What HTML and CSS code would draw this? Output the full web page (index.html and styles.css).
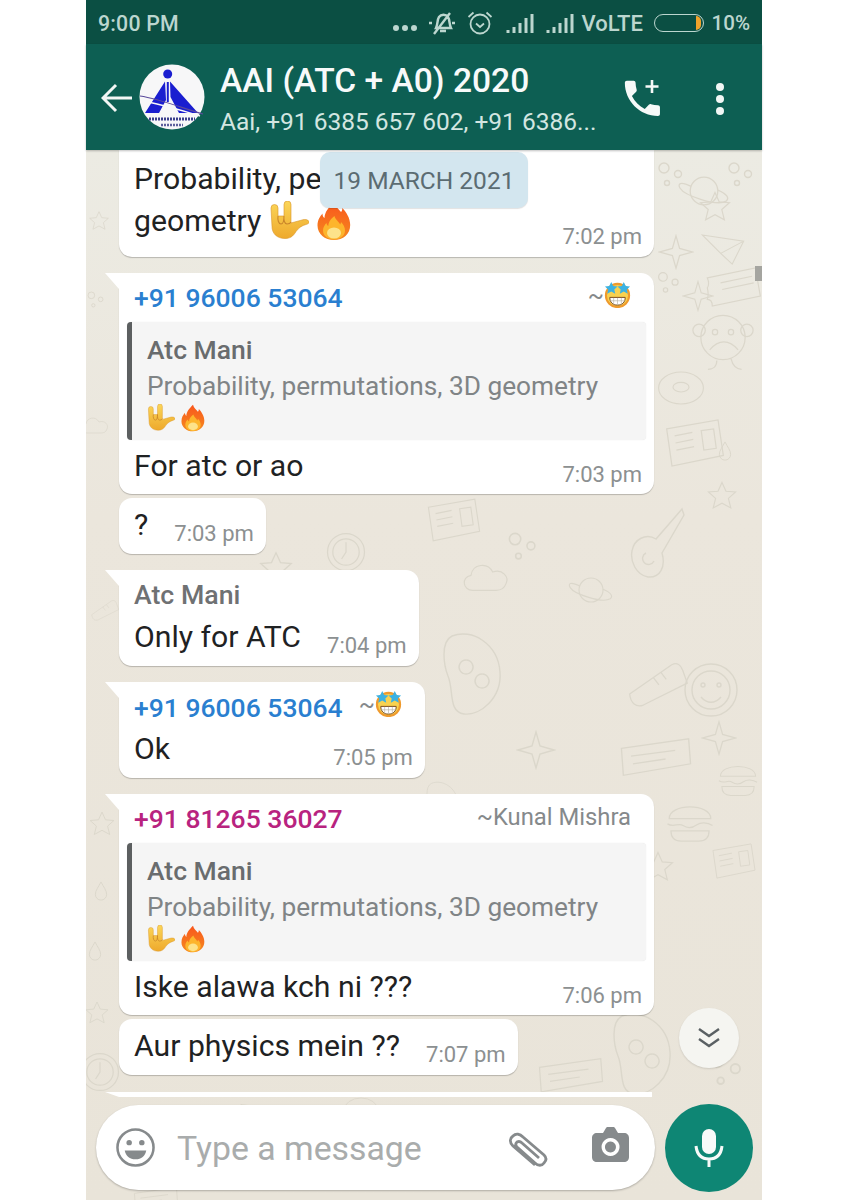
FILE: index.html
```html
<!DOCTYPE html>
<html lang="en">
<head>
<meta charset="utf-8">
<title>AAI (ATC + A0) 2020</title>
<link rel="stylesheet" href="styles.css">
</head>
<body>
<svg class="defs" width="0" height="0" aria-hidden="true">
  <defs>
    <linearGradient id="gold" x1="0" y1="0" x2="0" y2="1"><stop offset="0" stop-color="#fbd659"/><stop offset="1" stop-color="#eea92c"/></linearGradient>
    <linearGradient id="flame" x1="0" y1="0" x2="0" y2="1"><stop offset="0" stop-color="#f9561c"/><stop offset="1" stop-color="#f58a1f"/></linearGradient>
    <symbol id="hand" viewBox="0 0 40 40">
      <path d="M2 7a3.500 3.500 0 0 1 7 0v8h6V3.500a3.500 3.500 0 0 1 7 0V22l11-3c3-1 6-.5 7 1.500.5 1.500-1 2.500-3 3-4 1-7 3-10 7-3 5-6 7-11 7-8 0-13-5-13-12z" fill="url(#gold)" stroke="#d9952a" stroke-width=".6"/>
      <path d="M9 15c-.5 4 .5 8 3 8s3-4 3-8M15 15c-.5 4 .5 8 3 8 2 0 3.500-1 4-2" fill="none" stroke="#c9852a" stroke-width="1.100"/>
    </symbol>
    <symbol id="fire" viewBox="0 0 36 40">
      <path d="M18 1c1 5 5 7 7 10 1-1 1.500-2.500 1.200-4 4 4 8 10 8 17 0 9-7 15-16.200 15S1.500 33 1.500 24.500C1.500 19 4 15.500 6.500 12.500c0 2 .6 3.500 2 4.500C8.500 11 13 6 18 1z" fill="url(#flame)"/>
      <path d="M18.500 15c.6 3.500 4 5 5.700 8.500.5-.7.800-1.500.8-2.500 2.500 2.500 4 5.500 4 8.500 0 5.500-5 9-11 9S7 35 7 29.500c0-3 1.500-5.500 3.500-7.500.2 1.300.7 2.200 1.800 3 .2-4.500 3-7.500 6.200-10z" fill="#fdb52c"/>
      <ellipse cx="18" cy="32" rx="7" ry="5.500" fill="#fde38a"/>
    </symbol>
    <symbol id="star" viewBox="0 0 28 28">
      <circle cx="14" cy="15" r="12" fill="#f8d24f" stroke="#ef9a2d" stroke-width="2.200"/>
      <path d="M6 17h16c0 5-3 8-8 8s-8-3-8-8z" fill="#fff" stroke="#7a4a1c" stroke-width="1"/>
      <path d="M6.500 20.500h15M10 17.500v7M14 17.500v7.500M18 17.500v7" stroke="#b9b3a6" stroke-width=".7"/>
      <path d="M7.500 1l2 4.200 4.500.5-3.300 3.100.9 4.500-4.100-2.300-4.100 2.300.9-4.500L1 5.700l4.500-.5zM20.500 1l2 4.200 4.500.5-3.300 3.100.9 4.500-4.100-2.300-4.100 2.300.9-4.500L14 5.700l4.500-.5z" fill="#3cb2e2"/>
    </symbol>
    <symbol id="planet" viewBox="0 0 60 50"><circle cx="30" cy="25" r="15"/><path d="M16 20C4 14 1 17 4 22c5 8 40 20 50 14 4-3 1-8-9-12"/></symbol>
    <symbol id="spark" viewBox="0 0 40 40"><path d="M20 2l4 14 14 4-14 4-4 14-4-14-14-4 14-4z"/></symbol>
    <symbol id="five" viewBox="0 0 40 40"><path d="M20 3l5 11 12 1-9 8 3 12-11-6-11 6 3-12-9-8 12-1z"/></symbol>
    <symbol id="plane" viewBox="0 0 60 50"><path d="M3 8l54 8-15 30-15-14zM27 32l30-16"/></symbol>
    <symbol id="ticket" viewBox="0 0 70 50"><path d="M4 14L62 2l6 34-58 12c0-6-2-8-6-8 2-6 1-10 0-14 2-2 2-8 0-12zM20 20l38-8M22 28l38-8"/></symbol>
    <symbol id="monkey" viewBox="0 0 70 80"><circle cx="35" cy="36" r="25"/><circle cx="8" cy="28" r="7"/><circle cx="62" cy="28" r="7"/><circle cx="26" cy="30" r="3"/><circle cx="44" cy="30" r="3"/><path d="M20 50c10-12 22-12 32 0M28 62c0 8-6 10-10 10M44 60c2 8 6 12 12 12"/></symbol>
    <symbol id="donut" viewBox="0 0 60 50"><ellipse cx="30" cy="25" rx="28" ry="20"/><ellipse cx="30" cy="24" rx="10" ry="6"/></symbol>
    <symbol id="news" viewBox="0 0 70 60"><path d="M3 14l58-10 6 40-58 12zM12 22l20-4M13 30l20-4M14 38l20-4M42 16l14-2 3 22-14 2z"/></symbol>
    <symbol id="guitar" viewBox="0 0 60 80"><path d="M56 4L30 34c-10-6-22 0-24 12-2 10 4 24 16 26 12 1 18-10 14-24l22-38zM20 48a6 6 0 1 0 8 8"/></symbol>
    <symbol id="burger" viewBox="0 0 60 50"><path d="M6 20C6 2 54 2 54 20zM4 26c8 5 12-2 18 2s12 2 16-1 12-3 18 1M8 34h44c0 10-6 12-12 12H20C14 46 8 44 8 34z"/></symbol>
    <symbol id="clock" viewBox="0 0 50 50"><circle cx="25" cy="25" r="21"/><circle cx="25" cy="25" r="15"/><path d="M25 14v11l-5 8"/></symbol>
    <symbol id="cloud" viewBox="0 0 60 40"><path d="M14 36C2 36 0 20 12 18 14 4 32 2 38 14c12-4 20 6 16 14-2 6-6 8-12 8z"/></symbol>
    <symbol id="drop" viewBox="0 0 20 30"><path d="M10 2c4 8 8 12 8 18a8 8 0 0 1-16 0c0-6 4-10 8-18z"/></symbol>
    <symbol id="face" viewBox="0 0 60 60"><circle cx="30" cy="30" r="26"/><circle cx="30" cy="30" r="19"/><circle cx="22" cy="25" r="2"/><circle cx="38" cy="25" r="2"/><path d="M20 37c6 7 14 7 20 0"/></symbol>
    <symbol id="bean" viewBox="0 0 70 90"><path d="M16 6c20-8 46 8 48 36 2 26-20 44-36 42C12 82 18 60 12 46 8 36 4 12 16 6zM30 30a7 7 0 1 0 .1 0M46 44a7 7 0 1 0 .1 0"/></symbol>
    <symbol id="shoe" viewBox="0 0 70 50"><path d="M4 36L50 4c6-3 10 0 12 6l5 14-48 24c-8 3-14-2-15-12zM30 18l6 8M38 12l6 8"/></symbol>
    <symbol id="film" viewBox="0 0 80 50"><path d="M4 14L74 4l2 26L6 42zM14 22l46-6M16 30l34-5"/></symbol>
    <symbol id="rings" viewBox="0 0 30 30"><circle cx="8" cy="8" r="5"/><circle cx="22" cy="14" r="3.500"/><circle cx="11" cy="23" r="2.500"/></symbol>
  </defs>
</svg>

<main class="phone">
  <header class="app-top">
    <div class="status">
      <span class="status-time">9:00 PM</span>
      <div class="status-right">
        <span class="status-dots"><i></i><i></i><i></i></span>
        <svg class="ic-mute" viewBox="0 0 28 26"><path d="M1 13h3M24 13h3M8 18c2-4 1-8 3-11 2-3 7-3 9 0 2 3 1 7 3 11zM12 21h6M22 3L6 24" fill="none" stroke="#bcd6cf" stroke-width="2.400"/></svg>
        <svg class="ic-alarm" viewBox="0 0 26 26"><circle cx="13" cy="14" r="9.500" fill="none" stroke="#bcd6cf" stroke-width="1.800"/><path d="M9 13.500l4 3.500 4-3.500M1.500 7l5-4.500M24.500 7l-5-4.500" fill="none" stroke="#bcd6cf" stroke-width="1.800"/></svg>
        <svg class="ic-signal" viewBox="0 0 28 20"><path d="M1 16h3v3H1zM7 13h3v6H7zM13 9h3v10h-3zM19 4h3v15h-3zM25 0h3v19h-3z" fill="#bcd6cf"/></svg>
        <svg class="ic-signal sig2" viewBox="0 0 28 20"><path d="M1 16h3v3H1zM7 13h3v6H7zM13 9h3v10h-3zM19 4h3v15h-3zM25 0h3v19h-3z" fill="#bcd6cf"/></svg>
        <span class="status-text volte">VoLTE</span>
        <span class="battery"><i></i></span>
        <span class="status-text pct">10%</span>
      </div>
    </div>
    <div class="toolbar">
      <svg class="ic-back" viewBox="0 0 32 30"><path d="M31 15H3M15 2L2 15l13 13" fill="none" stroke="#f2f7f5" stroke-width="3"/></svg>
      <svg class="logo" viewBox="0 0 66 66">
        <circle cx="33" cy="33" r="32.500" fill="#f7f7f8"/>
        <circle cx="28.700" cy="10" r="4.500" fill="#1a1ed0"/>
        <path d="M26 17.500L6 49h14l7-13zM31 17.500L59 49H40L31.500 33z" fill="#1a1ed0"/>
        <path d="M28.800 18v20" stroke="#1a1ed0" stroke-width="2"/>
        <path d="M1 32c20 3 42 12 63 18" fill="none" stroke="#5b4a9c" stroke-width="1.200"/>
        <path d="M3 37c20 3 38 9 58 15" fill="none" stroke="#f7f7f8" stroke-width="1.400"/>
        <path d="M10 55h46" stroke="#3a3e8c" stroke-width="3" stroke-dasharray="2 1"/>
        <path d="M22 61h22" stroke="#5d5f9c" stroke-width="2.400" stroke-dasharray="2 1"/>
      </svg>
      <div class="title-block">
        <h1 class="title">AAI (ATC + A0) 2020</h1>
        <p class="subtitle">Aai, +91 6385 657 602, +91 6386...</p>
      </div>
      <svg class="ic-call" viewBox="0 0 36 37">
        <path transform="translate(-5 -5) scale(1.950)" d="M6.620 10.790c1.440 2.830 3.760 5.140 6.590 6.590l2.200-2.200c.27-.27.67-.36 1.020-.24 1.120.37 2.330.57 3.570.57.55 0 1 .45 1 1V20c0 .55-.45 1-1 1-9.390 0-17-7.610-17-17 0-.55.45-1 1-1h3.500c.55 0 1 .45 1 1 0 1.250.2 2.450.57 3.570.11.35.03.74-.25 1.020l-2.200 2.200z" fill="#f6f9f8"/>
        <path d="M28 0v13M21.500 6.500h13" stroke="#f6f9f8" stroke-width="2.600"/>
      </svg>
      <span class="kebab"><i></i><i></i><i></i></span>
    </div>
  </header>

  <section class="chat">
    <svg class="doodles" viewBox="0 0 676 1050" aria-hidden="true">
      <use href="#planet" x="590" y="18" width="56" height="46"/>
      <use href="#five" x="612" y="40" width="34" height="34"/>
      <use href="#plane" x="614" y="78" width="46" height="40"/>
      <use href="#spark" x="572" y="84" width="36" height="36"/>
      <use href="#rings" x="570" y="10" width="30" height="30"/>
      <use href="#rings" x="640" y="10" width="30" height="30"/>
      <use href="#rings" x="570" y="120" width="26" height="26"/>
      <use href="#ticket" x="618" y="115" width="58" height="44"/>
      <use href="#monkey" x="606" y="155" width="62" height="72"/>
      <use href="#spark" x="596" y="130" width="32" height="32"/>
      <use href="#donut" x="570" y="218" width="50" height="40"/>
      <use href="#news" x="578" y="265" width="62" height="56"/>
      <use href="#drop" x="632" y="290" width="14" height="22"/>
      <use href="#five" x="620" y="330" width="32" height="32"/>
      <use href="#guitar" x="540" y="355" width="60" height="80"/>
      <use href="#clock" x="238" y="380" width="44" height="44"/>
      <use href="#cloud" x="375" y="410" width="50" height="34"/>
      <use href="#five" x="172" y="400" width="36" height="36"/>
      <use href="#rings" x="420" y="380" width="34" height="34"/>
      <use href="#news" x="340" y="345" width="56" height="50"/>
      <use href="#bean" x="350" y="480" width="70" height="90"/>
      <use href="#shoe" x="540" y="510" width="64" height="48"/>
      <use href="#face" x="595" y="510" width="60" height="60"/>
      <use href="#film" x="530" y="585" width="80" height="48"/>
      <use href="#spark" x="615" y="570" width="36" height="36"/>
      <use href="#burger" x="578" y="650" width="52" height="46"/>
      <use href="#five" x="555" y="700" width="34" height="34"/>
      <use href="#bean" x="320" y="630" width="72" height="50"/>
      <use href="#drop" x="8" y="730" width="14" height="22"/>
      <use href="#drop" x="2" y="790" width="14" height="22"/>
      <use href="#five" x="2" y="660" width="28" height="28"/>
      <use href="#shoe" x="4" y="440" width="30" height="40"/>
      <use href="#five" x="2" y="60" width="22" height="22"/>
      <use href="#cloud" x="-6" y="255" width="30" height="40"/>
      <use href="#rings" x="0" y="130" width="20" height="40"/>
      <use href="#news" x="625" y="690" width="46" height="42"/>
      <use href="#burger" x="630" y="610" width="44" height="40"/>
      <use href="#clock" x="-8" y="900" width="44" height="44"/>
      <use href="#five" x="-2" y="850" width="26" height="26"/>
      <use href="#film" x="450" y="905" width="70" height="44"/>
      <use href="#bean" x="520" y="860" width="70" height="90"/>
      <use href="#rings" x="620" y="900" width="40" height="40"/>
      <use href="#planet" x="480" y="420" width="50" height="40"/>
      <use href="#spark" x="430" y="580" width="40" height="40"/>
      <use href="#clock" x="440" y="680" width="50" height="50"/>
      <use href="#cloud" x="350" y="740" width="60" height="40"/>
      <use href="#plane" x="150" y="950" width="40" height="28"/>
      <use href="#donut" x="250" y="945" width="50" height="30"/>
      <use href="#film" x="40" y="1035" width="60" height="30"/>
    </svg>

    <div class="thread">
      <article class="bubble wide top">
        <div class="body">
          <p class="text">Probability, permutations, 3D geometry <svg class="emoji big hand"><use href="#hand"/></svg> <svg class="emoji big fire"><use href="#fire"/></svg></p>
          <time class="stamp">7:02 pm</time>
        </div>
      </article>

      <article class="bubble wide tail">
        <div class="head quoted">
          <span class="sender blue">+91 96006 53064</span>
          <span class="alias">~<svg class="emoji star"><use href="#star"/></svg></span>
        </div>
        <blockquote class="quote">
          <div class="quote-name">Atc Mani</div>
          <div class="quote-text">Probability, permutations, 3D geometry</div>
          <div class="quote-emoji"><svg class="emoji small hand"><use href="#hand"/></svg><svg class="emoji small fire"><use href="#fire"/></svg></div>
        </blockquote>
        <div class="body after-quote">
          <p class="text">For atc or ao</p>
          <time class="stamp">7:03 pm</time>
        </div>
      </article>

      <article class="bubble follow plain">
        <div class="body">
          <p class="text">?</p>
          <time class="stamp">7:03 pm</time>
        </div>
      </article>

      <article class="bubble tail">
        <div class="head"><span class="sender grey">Atc Mani</span></div>
        <div class="body">
          <p class="text">Only for ATC</p>
          <time class="stamp">7:04 pm</time>
        </div>
      </article>

      <article class="bubble tail">
        <div class="head">
          <span class="sender blue">+91 96006 53064</span>
          <span class="alias">~<svg class="emoji star"><use href="#star"/></svg></span>
        </div>
        <div class="body">
          <p class="text">Ok</p>
          <time class="stamp">7:05 pm</time>
        </div>
      </article>

      <article class="bubble wide tail">
        <div class="head quoted">
          <span class="sender pink">+91 81265 36027</span>
          <span class="alias">~Kunal Mishra</span>
        </div>
        <blockquote class="quote">
          <div class="quote-name">Atc Mani</div>
          <div class="quote-text">Probability, permutations, 3D geometry</div>
          <div class="quote-emoji"><svg class="emoji small hand"><use href="#hand"/></svg><svg class="emoji small fire"><use href="#fire"/></svg></div>
        </blockquote>
        <div class="body after-quote">
          <p class="text">Iske alawa kch ni ???</p>
          <time class="stamp">7:06 pm</time>
        </div>
      </article>

      <article class="bubble follow plain">
        <div class="body">
          <p class="text">Aur physics mein ??</p>
          <time class="stamp">7:07 pm</time>
        </div>
      </article>

      <article class="bubble wide tail next"></article>
    </div>

    <div class="date-pill">19 MARCH 2021</div>
    <span class="scroll-thumb"></span>
    <button class="jump" type="button" aria-label="Scroll to bottom">
      <svg viewBox="0 0 24 22"><path d="M2 2l10 7 10-7M2 12l10 7 10-7" fill="none" stroke="#5a6063" stroke-width="2.400"/></svg>
    </button>

    <footer class="composer">
      <div class="input">
        <svg class="ic-smile" viewBox="0 0 40 40"><circle cx="20" cy="20" r="18.500" fill="none" stroke="#868a8c" stroke-width="2.600"/><circle cx="13.500" cy="15" r="2.800" fill="#868a8c"/><circle cx="26.500" cy="15" r="2.800" fill="#868a8c"/><path d="M9 23h22c-1 6-5 9-11 9s-10-3-11-9z" fill="#868a8c"/></svg>
        <span class="placeholder">Type a message</span>
        <svg class="ic-clip" viewBox="0 0 40 36"><path d="M27 33L5 14C1 10 2 6 5 4c3-3 7-2 10 1l21 18c3 3 2 6 0 8-2 3-6 3-9 0L9 15c-2-2-1-4 0-5 2-1 3-1 5 1l17 15" fill="none" stroke="#868a8c" stroke-width="2.800"/></svg>
        <svg class="ic-camera" viewBox="0 0 37 35"><path fill-rule="evenodd" d="M5 6h6l3-5c.5-.7 1-1 2-1h5c1 0 1.500.3 2 1l3 5h6c3 0 5 2 5 5v19c0 3-2 5-5 5H5c-3 0-5-2-5-5V11c0-3 2-5 5-5zm13.500 5a9 9 0 1 0 .1 0zm0 3.500a5.500 5.500 0 1 1-.1 0z" fill="#868a8c"/></svg>
      </div>
      <button class="mic" type="button" aria-label="Record voice message">
        <svg viewBox="0 0 30 38"><rect x="8" y="0" width="14" height="25" rx="7" fill="#f7faf9"/><path d="M2 17c1 9 6 13 13 13s12-4 13-13M15 30v8" fill="none" stroke="#f7faf9" stroke-width="3"/></svg>
      </button>
    </footer>
  </section>
</main>
</body>
</html>
```
FILE: styles.css
```css
* { box-sizing: border-box; }
html, body { margin: 0; padding: 0; background: #fff; }
body { font-family: Roboto, "Liberation Sans", sans-serif; width: 848px; height: 1200px; overflow: hidden; }
.defs { position: absolute; }
.phone { width: 676px; height: 1200px; margin-left: 86px; display: flex; flex-direction: column; }

.app-top { flex: none; }
.status { height: 44px; background: #0b4f43; display: flex; align-items: center; justify-content: space-between; padding: 2px 12px 0 12px; color: #bcd6cf; }
.status-time { font-size: 21.300px; font-weight: 500; letter-spacing: .2px; }
.status-right { display: flex; align-items: center; }
.status-dots { display: flex; gap: 3px; margin-top: 10px; }
.status-dots i { width: 6px; height: 6px; border-radius: 50%; background: #bcd6cf; }
.ic-mute { width: 28px; height: 26px; margin-left: 11px; }
.ic-alarm { width: 26px; height: 26px; margin-left: 11px; }
.ic-signal { width: 29px; height: 20px; margin-left: 12px; margin-top: 2px; }
.sig2 { margin-left: 11px; }
.status-text { font-size: 20.500px; font-weight: 500; }
.volte { margin-left: 8px; width: 62px; font-size: 22px; white-space: nowrap; }
.battery { width: 50px; height: 18px; border: 1.500px solid #bcd6cf; border-radius: 9px; margin-left: 10px; display: flex; justify-content: flex-end; align-items: stretch; padding: 1px 2px; }
.battery i { width: 5px; background: #f1a32b; border-radius: 0 6px 6px 0; }
.pct { margin-left: 8px; }

.toolbar { height: 106px; background: #0d5f53; display: flex; align-items: center; padding: 0 0 0 15px; color: #fff; box-shadow: 0 1px 2px rgba(0, 0, 0, .25); position: relative; z-index: 3; }
.ic-back { width: 32px; height: 30px; flex: none; margin-top: 2px; }
.logo { width: 66px; height: 66px; flex: none; margin-left: 6px; margin-top: -1px; }
.title-block { margin-left: 15px; width: 400px; flex: none; margin-top: 4px; }
.title { margin: 0; font-size: 33.600px; line-height: 40px; font-weight: 500; color: #f7fafa; }
.subtitle { margin: 5px 0 0; font-size: 24.500px; line-height: 32px; color: #d3e6e1; font-weight: 400; white-space: nowrap; }
.ic-call { width: 36px; height: 37px; flex: none; margin-left: 4px; margin-top: 2px; }
.kebab { display: flex; flex-direction: column; gap: 4px; margin-left: 56px; margin-top: 4px; }
.kebab i { width: 8px; height: 8px; border-radius: 50%; background: #f2f7f5; }

.chat { flex: 1; position: relative; overflow: hidden; background: linear-gradient(180deg, #ecebe3 0%, #ebe6dc 35%, #e9e4d9 100%); }
.doodles { position: absolute; inset: 0; width: 676px; height: 1050px; fill: none; stroke: #dbd7cb; stroke-width: 1.400; }
.thread { position: relative; display: flex; flex-direction: column; align-items: flex-start; padding-left: 33px; }

.bubble { position: relative; background: #fff; border-radius: 13px; box-shadow: 0 1px 1px rgba(0, 0, 0, .22); width: fit-content; }
.wide { width: 535px; }
.top { border-radius: 0 0 13px 13px; padding-top: 8px; }
.top .body { min-height: 99px; }
.tail { margin-top: 16px; border-top-left-radius: 0; }
.tail::before { content: ""; position: absolute; left: -14px; top: 0; border-top: 16px solid #fff; border-left: 14px solid transparent; }
.follow { margin-top: 4px; }
.plain { padding-top: 6px; }
.next { height: 5px; margin-top: 17px; width: 533px; border-radius: 0; box-shadow: none; }
.next::before { border-top-width: 5px; border-left-width: 14px; }

.head { height: 46px; display: flex; align-items: center; justify-content: space-between; gap: 16px; padding: 4px 23px 0 15px; }
.quoted { height: 49px; padding-top: 0; }
.sender { font-size: 26.500px; font-weight: 500; white-space: nowrap; }
.blue { color: #2a7fd0; }
.pink { color: #b8237f; }
.grey { color: #6f7173; font-size: 26.700px; }
.alias { font-size: 23.800px; color: #85898b; display: flex; align-items: center; white-space: nowrap; margin-top: -4px; }

.body { display: flex; justify-content: space-between; align-items: flex-end; gap: 26px; padding: 0 12px 4px 15px; min-height: 50px; }
.after-quote { margin-top: 5px; min-height: 49px; padding-bottom: 3px; }
.text { margin: 0; font-size: 30.200px; line-height: 42px; color: #1f2223; align-self: flex-start; max-width: 400px; }
.stamp { font-size: 22px; line-height: 32px; color: #8c9091; white-space: nowrap; flex: none; }

.emoji { display: inline-block; vertical-align: middle; }
.big.hand { width: 40px; height: 40px; margin-top: -5px; }
.big.fire { width: 36px; height: 40px; margin-top: -5px; }
.small.hand { width: 28px; height: 28px; }
.small.fire { width: 26px; height: 28px; margin-left: 5px; }
.star { width: 27px; height: 27px; margin-top: -3px; }

.quote { margin: 0 8px; height: 118px; background: #f5f5f5; border-left: 5px solid #5c5f60; border-radius: 4px; padding: 10px 0 0 15px; box-shadow: 0 0 1px rgba(0, 0, 0, .12); }
.quote-name { font-size: 26.500px; line-height: 36px; font-weight: 500; color: #696c6e; }
.quote-text { font-size: 26.250px; line-height: 36px; color: #808486; white-space: nowrap; }
.quote-emoji { height: 28px; display: flex; align-items: center; }

.date-pill { position: absolute; left: 234px; top: 2px; width: 208px; height: 56px; background: #d3e6ef; border-radius: 10px; color: #5b6c72; font-size: 24.500px; display: flex; align-items: center; justify-content: center; box-shadow: 0 1px 1px rgba(0, 0, 0, .12); }
.scroll-thumb { position: absolute; right: 0; top: 116px; width: 7px; height: 15px; background: #a5a5a0; }
.jump { position: absolute; left: 593px; top: 858px; width: 60px; height: 60px; border: 0; border-radius: 50%; background: #f5f5f1; padding: 0; display: flex; align-items: center; justify-content: center; box-shadow: 0 1px 2px rgba(0, 0, 0, .12); }
.jump svg { width: 24px; height: 22px; }

.composer { position: absolute; left: 10px; top: 955px; width: 657px; display: flex; align-items: flex-start; justify-content: space-between; }
.input { width: 559px; height: 85px; background: #fff; border-radius: 43px; display: flex; align-items: center; box-shadow: 0 1px 2px rgba(0, 0, 0, .25); padding-left: 20px; }
.ic-smile { width: 39px; height: 39px; flex: none; }
.placeholder { font-size: 33.800px; color: #a9acac; margin-left: 22px; margin-top: 1px; width: 310px; white-space: nowrap; flex: none; }
.ic-clip { width: 40px; height: 36px; flex: none; margin-left: 21px; margin-top: 4px; }
.ic-camera { width: 37px; height: 35px; flex: none; margin-left: 44px; margin-top: -6px; }
.mic { width: 88px; height: 88px; border: 0; border-radius: 50%; background: #0e8674; margin-top: -1px; padding: 0; display: flex; align-items: center; justify-content: center; }
.mic svg { width: 30px; height: 38px; }
```
